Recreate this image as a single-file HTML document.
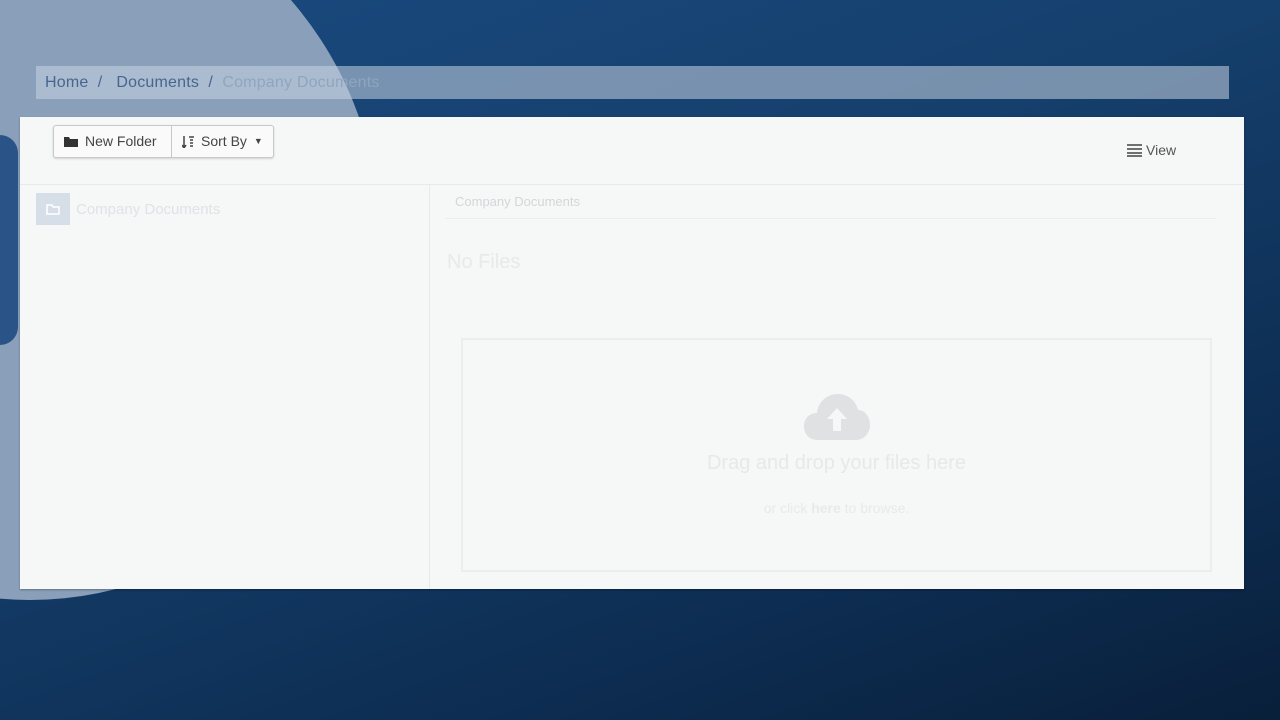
<!DOCTYPE html>
<html><head><meta charset="utf-8"><style>
*{margin:0;padding:0;box-sizing:border-box}
body{width:1280px;height:720px;overflow:hidden;position:relative;font-family:"Liberation Sans",sans-serif;
background:linear-gradient(160deg,#1a4a80 0%,#153f6c 40%,#0d2d52 75%,#091f3a 100%);}
.circ{position:absolute;left:-320px;top:-120px;width:700px;height:720px;border-radius:50%;background:#8aa0ba;}
.strip{position:absolute;left:0;top:135px;width:18px;height:210px;background:#2a5488;border-radius:0 40px 40px 0}
.bc{position:absolute;left:36px;top:66px;width:1193px;height:33px;background:rgba(200,212,226,0.55);font-size:16px;line-height:33px;padding-left:9px;color:#46668f;letter-spacing:.2px}
.bc span{color:#8fa5be}
.panel{position:absolute;left:20px;top:117px;width:1224px;height:472px;background:#f6f7f7;box-shadow:0 1px 2px rgba(0,0,0,.3)}
.btns{position:absolute;left:33px;top:8px;height:33px;border:1px solid #c8c8c8;border-radius:3px;display:flex;background:#fafafa;box-shadow:0 1px 2px rgba(0,0,0,.15)}
.btns div{font-size:14px;color:#444;line-height:31px;padding:0 10px;display:flex;align-items:center;gap:7px}
.btns div+div{border-left:1px solid #c8c8c8}
.view{position:absolute;left:1107px;top:25px;font-size:14px;color:#555;display:flex;align-items:center;gap:4px}
.hline{position:absolute;left:0;right:0;top:67px;border-top:1px solid #e8eaea}
.vline{position:absolute;left:409px;top:68px;bottom:0;border-left:1px solid #e8eaea}
.tree{position:absolute;left:16px;top:76px;display:flex;align-items:center;gap:6px;color:#dfe3e7;font-size:15px}
.ficon{width:34px;height:32px;background:#d6dee8;display:flex;align-items:center;justify-content:center}
.rt{position:absolute;left:435px;top:77px;font-size:13px;color:#d3d6d8}
.rline{position:absolute;left:425px;right:28px;top:101px;border-top:1px solid #eceeee}
.nof{position:absolute;left:427px;top:134px;font-size:20px;color:#e7e9ea}
.drop{position:absolute;left:441px;top:221px;width:751px;height:234px;border:2px solid #eceeee;text-align:center}
.d1{position:absolute;left:0;right:0;top:112px;font-size:20px;color:#e6e8e9}
.d2{position:absolute;left:0;right:0;top:160px;font-size:14px;color:#e8eaea}
</style></head><body>
<div class="circ"></div>
<div class="strip"></div>
<div class="bc">Home&nbsp; / &nbsp;&nbsp;Documents&nbsp; / &nbsp;<span>Company Documents</span></div>
<div class="panel">
 <div class="btns"><div style="padding:0 10px 0 10px;width:117px"><svg width="14" height="11"><path d="M0 1h5l1 2h8v8H0z" fill="#333"/></svg>New Folder</div><div style="width:102px"><svg width="12" height="12"><path d="M2 0v12M0 9l2 3 2-3M7 1h5M8 4h3M8 7h3M8 10h3" stroke="#444" stroke-width="1.5" fill="none"/></svg>Sort By <span style="font-size:9px">▼</span></div></div>
 <div class="view"><svg width="15" height="13"><path d="M0 1h15M0 5h15M0 9h15M0 12h15" stroke="#444" stroke-width="1.6"/></svg>View</div>
 <div class="hline"></div><div class="vline"></div>
 <div class="tree"><div class="ficon"><svg width="14" height="11"><path d="M1 1h5l1 2h6v7H1z" fill="none" stroke="#fff" stroke-width="1.5"/></svg></div>Company Documents</div>
 <div class="rt">Company Documents</div><div class="rline"></div>
 <div class="nof">No Files</div>
 <div class="drop">
  <svg style="position:absolute;left:341px;top:54px" width="66" height="46" viewBox="0 0 66 46"><path d="M14 46C5 46 0 40 0 32s6-13 13-13C14 8 23 0 34 0c10 0 18 7 20 16 7 0 12 7 12 15s-6 15-14 15z" fill="#dfe1e2"/><path d="M33 14l-10 11h6v12h8V25h6z" fill="#f6f7f7"/></svg>
  <div class="d1">Drag and drop your files here</div>
  <div class="d2">or click <b>here</b> to browse.</div>
 </div>
</div>
</body></html>
